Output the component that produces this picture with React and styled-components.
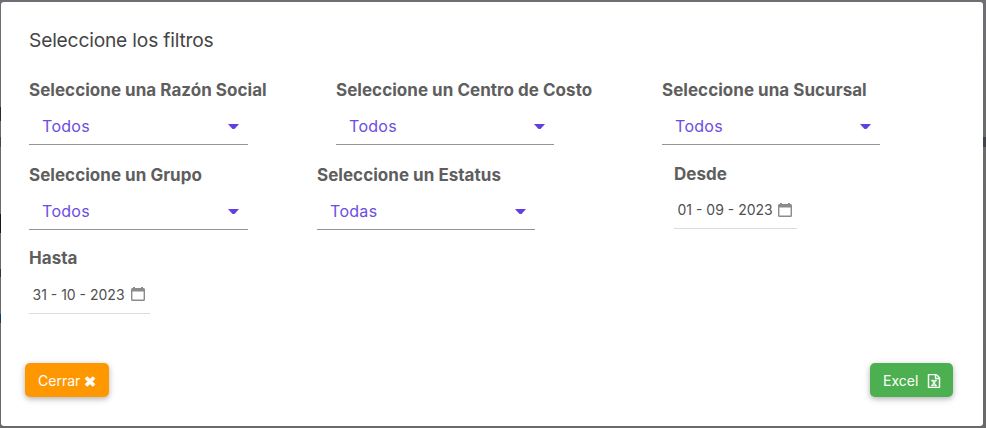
import React from "react";
import styled, { createGlobalStyle } from "styled-components";

const GlobalStyle = createGlobalStyle`
  * { box-sizing: border-box; }
  body { margin: 0; overflow: hidden; font-family: Inter, "Liberation Sans", sans-serif; }
`;

const Backdrop = styled.div`
  height: 428px;
  padding: 2px 3px 2px 1px;
  background:
    linear-gradient(#292a2d, #292a2d) 0 107px / 1px 14px no-repeat,
    linear-gradient(#46434a, #46434a) 0 137px / 1px 10px no-repeat,
    linear-gradient(#171717, #171717) 0 214px / 1px 19px no-repeat,
    linear-gradient(#303640, #303640) 0 269px / 1px 8px no-repeat,
    linear-gradient(#173b63, #173b63) 0 314px / 1px 9px no-repeat,
    linear-gradient(#41444a, #41444a) 100% 137px / 3px 10px no-repeat,
    linear-gradient(#706e75 0, #6b6b6c 100px, #696969);
`;

const Modal = styled.section`
  display: flex;
  flex-direction: column;
  height: 424px;
  padding: 26px 30px 29px 28px;
  background: #fff;
  border-radius: 3px;
`;

const Title = styled.h1`
  margin: 0;
  font-size: 19.2px;
  font-weight: 400;
  line-height: 24px;
  letter-spacing: -0.18px;
  color: #444;
`;

const Filters = styled.form`
  margin-top: 26px;
`;

const Row = styled.div`
  display: grid;
  grid-template-columns: ${(p) => p.$columns};
  height: ${(p) => p.$height}px;
`;

const Field = styled.div`
  min-width: 0;
`;

const Label = styled.label`
  display: block;
  font-size: 17px;
  font-weight: 700;
  line-height: 24px;
  letter-spacing: 0.03px;
  white-space: nowrap;
  color: #5e5e5e;
`;

const DateLabel = styled(Label)`
  line-height: 22px;
`;

const SelectBox = styled.div`
  display: flex;
  align-items: center;
  justify-content: space-between;
  width: ${(p) => p.$width || 218}px;
  height: 36px;
  margin-top: 7px;
  padding: 0 9px 0 13px;
  border-bottom: 1px solid #949494;
  font-size: 16px;
  font-weight: 400;
  letter-spacing: 0.3px;
  color: #6c4de0;
`;

const SelectValue = styled.span`
  padding-bottom: 2px;
`;

const DateBox = styled.div`
  display: flex;
  align-items: center;
  justify-content: space-between;
  width: ${(p) => p.$width}px;
  height: ${(p) => p.$height}px;
  margin-top: 8px;
  padding: 0 5px 2px 3.500px;
  border-bottom: 1px solid #dcdcdc;
  font-size: 14px;
  color: #505050;
  white-space: nowrap;
`;

const Actions = styled.footer`
  display: flex;
  justify-content: space-between;
  margin: auto 0 0 -4px;
`;

const Button = styled.button`
  display: flex;
  align-items: center;
  justify-content: space-between;
  width: ${(p) => p.$width}px;
  height: 34px;
  padding: 1px 12px 0 13px;
  border: 0;
  border-radius: 5px;
  background: ${(p) => p.$color};
  box-shadow: 0 2px 5px rgba(0, 0, 0, 0.2), 0 2px 8px rgba(0, 0, 0, 0.12);
  font: 400 14px Inter, sans-serif;
  color: #fff;
`;

const Caret = () => (
  <svg width="11" height="5" viewBox="0 0 11 5" fill="#6240dd">
    <path d="M0 0h11L7 4.5Q5.500 5.500 4 4.500Z" />
  </svg>
);

const CalendarIcon = () => (
  <svg width="14" height="14" viewBox="0 0 14 14" fill="#8b8b8b">
    <path fillRule="evenodd" d="M2 0h2v1h6V0h2v1h.5Q14 1 14 2.500v10q0 1.500-1.500 1.500h-11Q0 14 0 12.500v-10Q0 1 1.500 1H2ZM1.400 4.500v7.600q0 .5.5.5h10.200q.5 0 .5-.5V4.500Z" />
  </svg>
);

const CloseIcon = () => (
  <svg width="14" height="14" viewBox="0 0 1792 1792" fill="currentColor" stroke="currentColor" strokeWidth="100">
    <path d="M1490 1322q0 40-28 68l-136 136q-28 28-68 28t-68-28l-294-294-294 294q-28 28-68 28t-68-28l-136-136q-28-28-28-68t28-68l294-294-294-294q-28-28-28-68t28-68l136-136q28-28 68-28t68 28l294 294 294-294q28-28 68-28t68 28l136 136q28 28 28 68t-28 68l-294 294 294 294q28 28 28 68z" />
  </svg>
);

const ExcelIcon = () => (
  <svg width="14" height="14" viewBox="0 0 1792 1792" fill="currentColor" stroke="currentColor" strokeWidth="60">
    <path d="M1596 380q28 28 48 76t20 88v1152q0 40-28 68t-68 28h-1344q-40 0-68-28t-28-68v-1600q0-40 28-68t68-28h896q40 0 88 20t76 48zm-444-244v376h376q-10-29-22-41l-313-313q-12-12-41-22zm384 1528v-1024h-416q-40 0-68-28t-28-68v-416h-768v1536h1280zm-979-234v106h281v-106h-75l103-161q5-7 10-16.500t7.500-13.500 3.500-4h2q1 4 5 10 2 4 4.500 7.500t6 8 6.500 8.500l107 161h-76v106h291v-106h-68l-192-273 195-282h67v-107h-279v107h74l-103 159q-4 7-10 16.500t-9 13.500l-2 3h-2q-1-4-5-10-6-11-17-23l-106-159h76v-107h-290v107h68l189 272-194 283h-68z" />
  </svg>
);

const SelectField = ({ label, value, width }) => (
  <Field>
    <Label>{label}</Label>
    <SelectBox $width={width}>
      <SelectValue>{value}</SelectValue>
      <Caret />
    </SelectBox>
  </Field>
);

const DateField = ({ label, value, width, height }) => (
  <Field>
    <DateLabel>{label}</DateLabel>
    <DateBox $width={width} $height={height}>
      <span>{value}</span>
      <CalendarIcon />
    </DateBox>
  </Field>
);

export default function App() {
  return (
    <>
      <GlobalStyle />
      <Backdrop>
        <Modal>
          <Title>Seleccione los filtros</Title>
          <Filters>
            <Row $columns="307px 326px 1fr" $height={85}>
              <SelectField label="Seleccione una Razón Social" value="Todos" width={219} />
              <SelectField label="Seleccione un Centro de Costo" value="Todos" />
              <SelectField label="Seleccione una Sucursal" value="Todos" />
            </Row>
            <Row $columns="288px 357px 1fr" $height={84}>
              <SelectField label="Seleccione un Grupo" value="Todos" width={219} />
              <SelectField label="Seleccione un Estatus" value="Todas" />
              <DateField label="Desde" value="01 - 09 - 2023" width={123} height={36} />
            </Row>
            <Row $columns="1fr" $height={68}>
              <DateField label="Hasta" value="31 - 10 - 2023" width={121} height={37} />
            </Row>
          </Filters>
          <Actions>
            <Button type="button" $color="#ff9800" $width={84}>
              Cerrar <CloseIcon />
            </Button>
            <Button type="button" $color="#4caf50" $width={83}>
              Excel <ExcelIcon />
            </Button>
          </Actions>
        </Modal>
      </Backdrop>
    </>
  );
}
